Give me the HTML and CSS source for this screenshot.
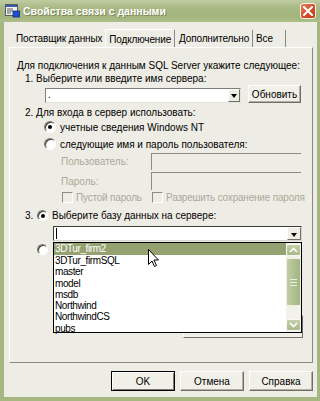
FILE: index.html
```html
<!DOCTYPE html>
<html>
<head>
<meta charset="utf-8">
<link rel="stylesheet" href="styles.css">
</head>
<body>
<div class="window">
  <div class="titlebar">
    <svg class="app-icon" width="15" height="14" viewBox="0 0 15 14">
      <rect x="0.5" y="0.5" width="12" height="11" fill="#f4f4f4" stroke="#5a5a5a"/>
      <rect x="1" y="1" width="11" height="2" fill="#3a5aa8"/>
      <line x1="2" y1="5" x2="8" y2="5" stroke="#555"/>
      <line x1="2" y1="7" x2="8" y2="7" stroke="#555"/>
      <line x1="2" y1="9" x2="6" y2="9" stroke="#555"/>
      <rect x="8" y="7" width="6.5" height="6" fill="#1f4fd0" stroke="#123080" stroke-width="0.8"/>
    </svg>
    <span class="title">Свойства связи с данными</span>
    <div class="close">
      <svg width="10" height="10" viewBox="0 0 10 10"><path d="M1 1 L9 9 M9 1 L1 9" stroke="#fff" stroke-width="2" stroke-linecap="square"/></svg>
    </div>
  </div>
  <div class="client">
    <div class="tabs">
      <div class="tab tab1">Поставщик данных</div>
      <div class="tab tab2 active">Подключение</div>
      <div class="tab tab3">Дополнительно</div>
      <div class="tab tab4">Все</div>
    </div>
    <div class="panel">
      <div class="line intro">Для подключения к данным SQL Server укажите следующее:</div>
      <div class="line step">1. Выберите или введите имя сервера:</div>
      <div class="server">
        <div class="combo combo-server"><span class="combo-text">.</span><span class="combo-btn"><i class="tri"></i></span></div>
        <div class="btn btn-refresh">Обновить</div>
      </div>
      <div class="line step step2">2. Для входа в сервер использовать:</div>
      <div class="opt opt1"><span class="radio checked"></span><span>учетные сведения Windows NT</span></div>
      <div class="opt opt2"><span class="radio"></span><span>следующие имя и пароль пользователя:</span></div>
      <div class="field f-user"><span class="flabel">Пользователь:</span><span class="input"></span></div>
      <div class="field f-pass"><span class="flabel">Пароль:</span><span class="input"></span></div>
      <div class="checks">
        <span class="chk-item chk1"><span class="chk"></span>Пустой пароль</span>
        <span class="chk-item"><span class="chk"></span>Разрешить сохранение пароля</span>
      </div>
      <div class="step3"><span class="num">3.</span><span class="radio checked small"></span><span>Выберите базу данных на сервере:</span></div>
      <div class="db-wrap">
        <div class="combo combo-db"><span class="combo-text"><i class="caret"></i></span><span class="combo-btn flat"><i class="tri"></i></span></div>
        <div class="dropdown">
          <div class="items">
            <div class="item sel">3DTur_firm2</div>
            <div class="item">3DTur_firmSQL</div>
            <div class="item">master</div>
            <div class="item">model</div>
            <div class="item">msdb</div>
            <div class="item">Northwind</div>
            <div class="item">NorthwindCS</div>
            <div class="item">pubs</div>
          </div>
          <div class="scrollbar">
            <div class="sb-btn">
              <svg width="9" height="6" viewBox="0 0 9 6"><path d="M1 5 L4.5 1.5 L8 5" fill="none" stroke="#fff" stroke-width="1.6"/></svg>
            </div>
            <div class="sb-thumb"><i></i><i></i><i></i></div>
            <div class="sb-space"></div>
            <div class="sb-btn">
              <svg width="9" height="6" viewBox="0 0 9 6"><path d="M1 1 L4.5 4.5 L8 1" fill="none" stroke="#fff" stroke-width="1.6"/></svg>
            </div>
          </div>
        </div>
      </div>
      <div class="attach"><span class="radio small"></span></div>
      <div class="test-btn"></div>
    </div>
    <div class="footer">
      <div class="btn fbtn default">OK</div>
      <div class="btn fbtn">Отмена</div>
      <div class="btn fbtn">Справка</div>
    </div>
  </div>
  <svg class="cursor" width="12" height="19" viewBox="0 0 12 19">
    <path d="M0.5 0.5 L0.5 15.5 L4 12 L6.5 17.5 L8.5 16.5 L6 11 L10.5 11 Z" fill="#fff" stroke="#000" stroke-width="1"/>
  </svg>
</div>
</body>
</html>
```
FILE: styles.css
```css
* { box-sizing: border-box; }
body {
  margin: 0;
  font-family: "Liberation Sans", Arial, sans-serif;
  font-size: 10px;
  color: #000;
  background: #fff;
}
.window {
  position: relative;
  width: 320px;
  height: 401px;
  background: #a5b680;
  display: flex;
  flex-direction: column;
  overflow: hidden;
}
.titlebar {
  height: 22px;
  flex: none;
  display: flex;
  align-items: center;
  padding: 0 4px 0 5px;
  background: linear-gradient(#bfcca2, #a9b985 35%, #a3b47d 75%, #afbe8b);
}
.app-icon { flex: none; }
.title {
  flex: 1;
  margin-left: 3px;
  color: #fff;
  font-weight: bold;
  font-size: 10.5px;
  text-shadow: 1px 1px 0 #7c8a5a;
  white-space: nowrap;
}
.close {
  width: 16px;
  height: 16px;
  border: 1px solid #f4f4ee;
  border-radius: 3px;
  background: linear-gradient(135deg, #e9825c, #d4502a 50%, #bd3e1a);
  display: flex;
  align-items: center;
  justify-content: center;
}
.client {
  flex: 1;
  margin: 0 3px 4px 4px;
  background: #eeede5;
  display: flex;
  flex-direction: column;
}
.tabs {
  height: 25px;
  flex: none;
  display: flex;
  align-items: flex-end;
  padding-left: 5px;
}
.tab {
  height: 17px;
  line-height: 17px;
  white-space: nowrap;
  letter-spacing: -0.15px;
}
.tab1 { padding: 0 3px 0 7px; }
.tab2 {
  height: 19px;
  line-height: 19px;
  margin-bottom: -1px;
  padding: 0 3px 0 3px;
  background: #eeede5;
  border-left: 1px solid #fff;
  border-top: 1px solid #fff;
  border-right: 1px solid #8a8a80;
  position: relative;
}
.tab3 { padding: 0 3px 0 4px; border-right: 1px solid #8a8a80; }
.tab4 { padding: 0 12px 0 3px; border-right: 1px solid #8a8a80; }
.panel {
  height: 316px;
  flex: none;
  margin: 0 4px 0 5px;
  border: 1px solid;
  border-color: #fff #8a8a80 #8a8a80 #fff;
  padding-top: 11px;
  position: relative;
}
.line { height: 13px; line-height: 13px; white-space: nowrap; }
.intro { margin-left: 7px; }
.step { margin-left: 15px; }
.step2 { margin-top: 3px; }
.server {
  margin-left: 35px;
  height: 18px;
  display: flex;
  align-items: center;
}
.combo {
  background: #fff;
  border: 1px solid;
  border-color: #7f7f77 #e4e3dc #e4e3dc #7f7f77;
  display: flex;
  align-items: stretch;
}
.combo-server { width: 196px; height: 15px; margin-top: 2px; }
.combo-text {
  flex: 1;
  padding-left: 2px;
  line-height: 12px;
  display: flex;
  align-items: center;
}
.combo-btn {
  width: 12px;
  background: #eeede5;
  border: 1px solid;
  border-color: #fff #6f6f66 #6f6f66 #fff;
  display: flex;
  align-items: center;
  justify-content: center;
}
.combo-btn.flat { width: 14px; }
.tri {
  display: block;
  width: 0;
  height: 0;
  border-left: 3.5px solid transparent;
  border-right: 3.5px solid transparent;
  border-top: 4px solid #000;
  margin-top: 2px;
}
.btn {
  display: flex;
  align-items: center;
  justify-content: center;
  background: #f0efe8;
  border: 1px solid;
  border-color: #fff #6f6f66 #6f6f66 #fff;
  box-shadow: inset -1px -1px 0 #b2b0a4;
  white-space: nowrap;
}
.btn-refresh { margin-left: 7px; width: 53px; height: 18px; }
.opt {
  margin-left: 34px;
  height: 14px;
  display: flex;
  align-items: center;
  gap: 4px;
  white-space: nowrap;
}
.opt1 { margin-top: 1px; }
.opt2 { margin-top: 3px; }
.radio {
  flex: none;
  width: 12px;
  height: 12px;
  border-radius: 50%;
  background: #fff;
  border: 1px solid;
  border-color: #7d7d75 #fff #fff #7d7d75;
  box-shadow: inset 1px 1px 0 #3c3c38;
  display: flex;
  align-items: center;
  justify-content: center;
}
.radio.small { width: 11px; height: 11px; }
.radio.checked::after {
  content: "";
  width: 4px;
  height: 4px;
  border-radius: 50%;
  background: #000;
}
.field {
  margin-left: 51px;
  display: flex;
  align-items: center;
  color: #aca899;
}
.f-user { margin-top: 2px; height: 17px; }
.f-pass { margin-top: 2px; height: 18px; }
.flabel { width: 90px; }
.input {
  width: 150px;
  height: 100%;
  border-left: 1px solid #8e8d85;
  border-top: 1px solid #8e8d85;
}
.checks {
  margin-top: 1px;
  margin-left: 52px;
  height: 13px;
  display: flex;
  align-items: center;
  color: #aca899;
  white-space: nowrap;
  letter-spacing: -0.2px;
}
.chk-item { display: flex; align-items: center; gap: 3px; }
.chk1 { width: 90px; }
.chk {
  width: 11px;
  height: 11px;
  border: 1px solid;
  border-color: #8e8d85 #fff #fff #8e8d85;
}
.step3 {
  margin-top: 5px;
  margin-left: 15px;
  height: 13px;
  display: flex;
  align-items: center;
  white-space: nowrap;
}
.num { width: 12px; }
.step3 .radio { margin-right: 4px; }
.db-wrap {
  margin-top: 4px;
  margin-left: 43px;
  width: 249px;
  height: 15px;
  position: relative;
  z-index: 2;
}
.combo-db {
  height: 15px;
  border-color: #3d3d38 #d8d7cf #d8d7cf #3d3d38;
}
.caret {
  display: block;
  width: 1px;
  height: 11px;
  background: #000;
}
.dropdown {
  position: absolute;
  top: 16px;
  left: 0;
  width: 249px;
  height: 91px;
  border: 1px solid #000;
  background: #fff;
  display: flex;
}
.items { flex: 1; }
.item {
  height: 11.3px;
  line-height: 11px;
  padding-left: 1px;
  font-size: 10px;
  letter-spacing: -0.4px;
  white-space: nowrap;
}
.item.sel {
  height: 12px;
  line-height: 12px;
  background: #94a271;
  color: #fff;
}
.scrollbar {
  width: 15px;
  background: #f3f2ea;
  display: flex;
  flex-direction: column;
  padding: 1px 0 1px 0;
}
.sb-btn {
  height: 12px;
  background: linear-gradient(#c4d0a9, #a9b98a);
  border: 1px solid #f6f7f0;
  border-radius: 2px;
  display: flex;
  align-items: center;
  justify-content: center;
}
.sb-thumb {
  margin-top: 2px;
  height: 48px;
  background: linear-gradient(90deg, #c2cea7, #aebd8e 60%, #a5b585);
  border: 1px solid #eef0e2;
  border-radius: 2px;
  display: flex;
  flex-direction: column;
  align-items: center;
  justify-content: center;
  gap: 2px;
}
.sb-thumb i {
  display: block;
  width: 7px;
  height: 1px;
  background: #eef2e2;
}
.sb-space { flex: 1; }
.attach {
  margin-top: 3px;
  margin-left: 27px;
  height: 12px;
}
.test-btn {
  margin-top: 59px;
  margin-left: 173px;
  width: 120px;
  height: 23px;
  background: #f0efe8;
  border: 1px solid;
  border-color: #fff #6f6f66 #6f6f66 #fff;
}
.footer {
  flex: 1;
  display: flex;
  justify-content: flex-end;
  align-items: flex-start;
  padding: 8px 4px 0 0;
  gap: 5px;
}
.fbtn { width: 64px; height: 20px; }
.btn.default {
  border-color: #000;
  box-shadow: inset 1px 1px 0 #fff, inset -1px -1px 0 #7a7a70;
}
.cursor {
  position: absolute;
  left: 148px;
  top: 249px;
  z-index: 5;
}
```
